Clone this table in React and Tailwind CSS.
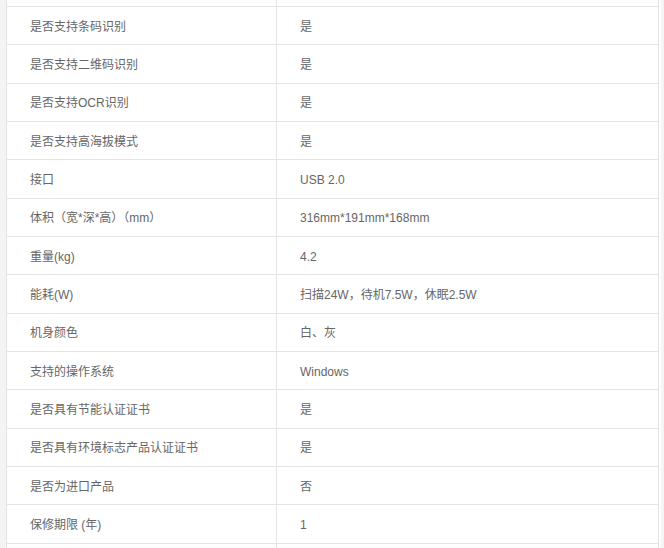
import React from 'react';

const specs = [
  ['是否支持条码识别', '是'],
  ['是否支持二维码识别', '是'],
  ['是否支持OCR识别', '是'],
  ['是否支持高海拔模式', '是'],
  ['接口', 'USB 2.0'],
  ['体积（宽*深*高）（mm）', '316mm*191mm*168mm'],
  ['重量(kg)', '4.2'],
  ['能耗(W)', '扫描24W，待机7.5W，休眠2.5W'],
  ['机身颜色', '白、灰'],
  ['支持的操作系统', 'Windows'],
  ['是否具有节能认证证书', '是'],
  ['是否具有环境标志产品认证证书', '是'],
  ['是否为进口产品', '否'],
  ['保修期限 (年)', '1'],
  ['', ''],
];

const Row = ({ label, value }) => (
  <div className="flex h-[38.33px] shrink-0 border-b border-[#e4e4e4]">
    <div className="w-[270px] shrink-0 border-r border-[#e4e4e4] pl-[23px] pt-[2px] flex items-center">{label}</div>
    <div className="flex-1 pl-[23px] pt-[2px] flex items-center">{value}</div>
  </div>
);

export default function App() {
  return (
    <div className="w-[664px] h-[548px] overflow-hidden bg-[#f4f4f4] pl-[6px] pr-[3px]">
      <div
        className="h-full bg-white pr-[2px] overflow-hidden text-[12px] text-[#666]"
        style={{ fontFamily: '"Liberation Sans", "Noto Sans CJK SC", sans-serif' }}
      >
        <div className="border-l border-r border-[#e4e4e4] -mt-[31.33px]">
          <Row label="" value="" />
          {specs.map(([label, value], i) => (
            <Row key={i} label={label} value={value} />
          ))}
        </div>
      </div>
    </div>
  );
}
